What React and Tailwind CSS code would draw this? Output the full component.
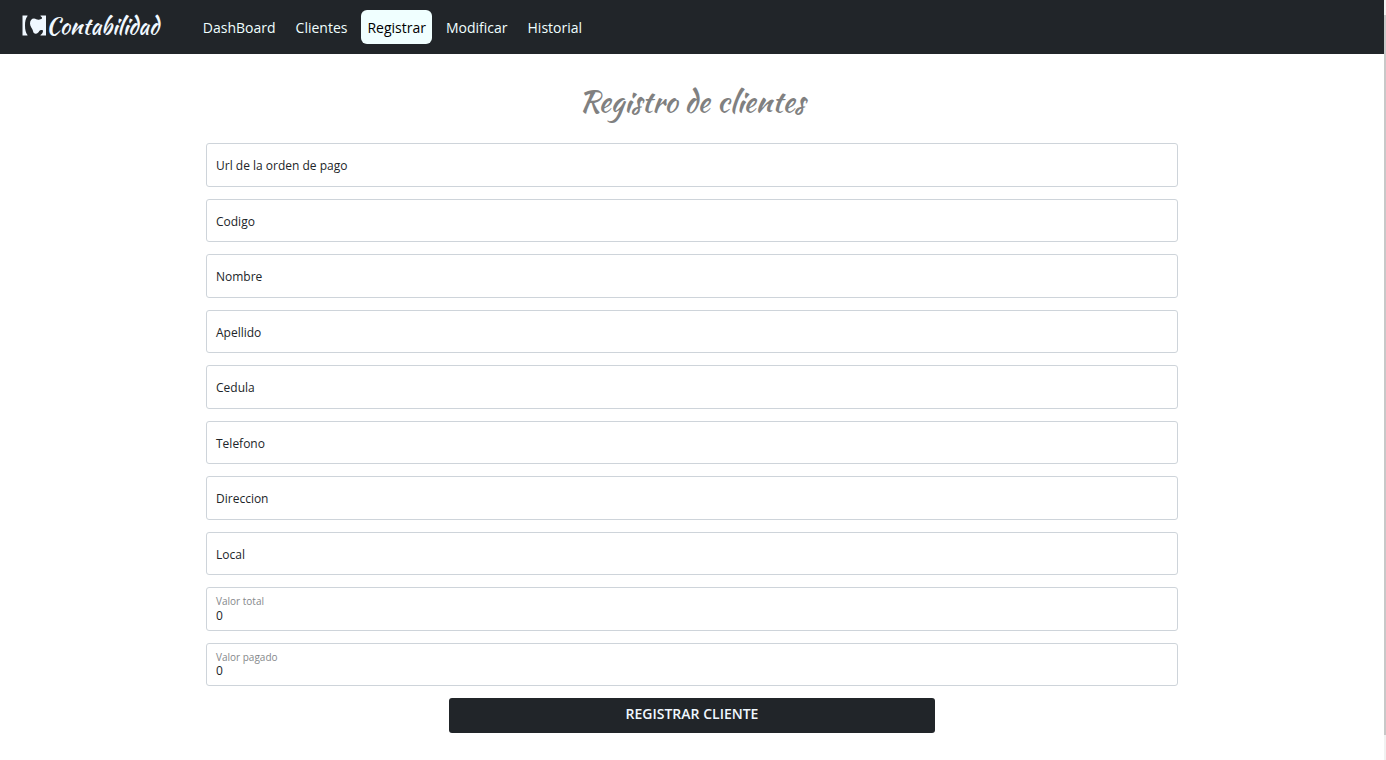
import React from 'react';

const links = ['DashBoard', 'Clientes', 'Registrar', 'Modificar', 'Historial'];

const fields = [
  { id: 'url', label: 'Url de la orden de pago' },
  { id: 'codigo', label: 'Codigo' },
  { id: 'nombre', label: 'Nombre' },
  { id: 'apellido', label: 'Apellido' },
  { id: 'cedula', label: 'Cedula' },
  { id: 'telefono', label: 'Telefono' },
  { id: 'direccion', label: 'Direccion' },
  { id: 'local', label: 'Local' },
  { id: 'total', label: 'Valor total', value: '0' },
  { id: 'pagado', label: 'Valor pagado', value: '0' },
];

function Logo() {
  return (
    <svg className="h-[22px] w-6 shrink-0" viewBox="0 0 24 22" fill="#f0f8ff" aria-hidden="true">
      <path d="M0.5 0.500H5.500V1C3.600 3.500 3 6.500 3 10.500s.8 7.400 2.500 9.600V20.500H.5z" />
      <path d="M8 8.500C8 5.500 9.500 3.500 12 3.500c2 0 3 1.600 5 1.200 2-.4 3.500-.9 3-2.200L18.500.9V.5H24V20.500H18.500V20c1.800-1.200 2.600-2.600 2.500-4.500-1.500-.8-3-.5-3.700.6-.7 1.500-1.800 2.700-3.800 2.600-2.200-.1-2.300-2-2.800-3.700C10.200 13.200 8 11.500 8 8.500z" />
    </svg>
  );
}

function Field({ id, label, value }) {
  const [text, setText] = React.useState(value || '');
  const raised = text !== '';
  return (
    <div className="grid">
      <input
        id={id}
        name={id}
        value={text}
        onChange={(e) => setText(e.target.value)}
        className="col-start-1 row-start-1 w-full min-w-0 rounded-[3px] border border-[#ced4da] bg-white px-[9px] pt-3.5 text-xs text-[#212529] outline-none focus:border-[#86b7fe]"
      />
      <label
        htmlFor={id}
        className={
          raised
            ? 'pointer-events-none col-start-1 row-start-1 self-start px-2.5 pt-2 text-[10px] leading-3 text-[#85888b]'
            : 'pointer-events-none col-start-1 row-start-1 self-center px-2.5 pt-[3px] text-xs leading-4 text-[#212529]'
        }
      >
        {label}
      </label>
    </div>
  );
}

export default function App() {
  return (
    <div className="flex min-h-screen bg-white font-['Segoe_UI','Open_Sans',sans-serif]">
      <div className="min-w-0 flex-1">
        <header className="flex min-h-[54px] flex-wrap items-center bg-[#212529] pl-[22px]">
          <a href="#inicio" className="mr-[38px] flex items-center pb-0.5 text-[#f0f8ff]">
            <Logo />
            <span className="font-['Kaushan_Script','Liberation_Serif',serif] text-[23px] leading-8">Contabilidad</span>
          </a>
          <nav className="flex flex-wrap items-center gap-2">
            {links.map((name) => (
              <a
                key={name}
                href={'#' + name.toLowerCase()}
                aria-current={name === 'Registrar' ? 'page' : undefined}
                className={
                  name === 'Registrar'
                    ? 'rounded-md bg-[#f0ffff] px-1.5 pt-1.5 pb-1 text-sm leading-6 text-black'
                    : 'rounded-md px-1.5 pt-1.5 pb-1 text-sm leading-6 text-[#f0ffff]'
                }
              >
                {name}
              </a>
            ))}
          </nav>
        </header>
        <main className="px-4 pt-[25px] pb-6">
          <h1 className="text-center font-['Kaushan_Script','Liberation_Serif',serif] text-3xl leading-[44px] text-[#808080]">
            Registro de clientes
          </h1>
          <form className="mx-auto mt-5 max-w-[972px]" onSubmit={(e) => e.preventDefault()}>
            <div className="grid min-h-[543px] grid-rows-10 gap-3">
              {fields.map((f) => (
                <Field key={f.id} {...f} />
              ))}
            </div>
            <button
              type="submit"
              className="mx-auto mt-3 block w-1/2 rounded-[3px] bg-[#212529] pt-1 pb-[7px] text-sm leading-6 font-semibold text-[#f0f8ff]"
            >
              REGISTRAR CLIENTE
            </button>
          </form>
        </main>
      </div>
      <div className="flex w-0.5 bg-[#f1f1f1] pt-[15px] pb-[25px]" aria-hidden="true">
        <div className="w-full bg-[#c8c8c8]" />
      </div>
    </div>
  );
}
